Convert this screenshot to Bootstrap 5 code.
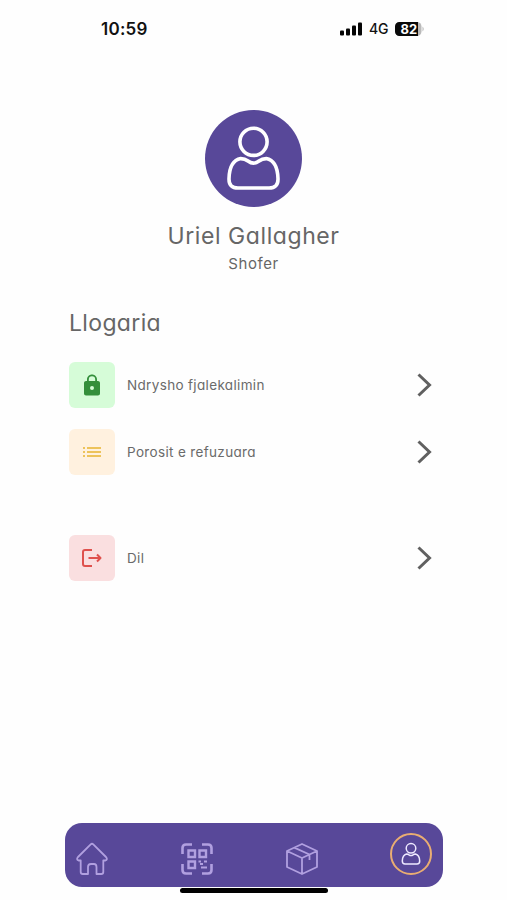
<!DOCTYPE html>
<html lang="sq">
<head>
<meta charset="utf-8">
<meta name="viewport" content="width=device-width, initial-scale=1">
<title>Llogaria</title>
<link href="https://cdn.jsdelivr.net/npm/bootstrap@5.3.0/dist/css/bootstrap.min.css" rel="stylesheet">
<style>
body{background:#fefefe;color:#666;font-family:Inter,"Open Sans",sans-serif;font-feature-settings:"cv11";overflow:hidden}
svg{display:block;flex:none}
.screen{height:900px;width:507px}
.status{height:58px;padding:0 82px 0 101px;color:#111}
.clock{font-size:17px;font-weight:600;line-height:20px;letter-spacing:.25px;width:60px}
.network{font-size:14px;font-weight:500;line-height:20px;letter-spacing:-.2px;margin-left:7px;width:26px}
.profile{padding-top:52px;width:507px}
.avatar{width:97px;height:97px;background:#584899}
.person-name{font-size:23px;line-height:30px;font-weight:400;letter-spacing:.58px;margin-top:14px}
.role{font-size:15px;line-height:20px;letter-spacing:.6px;margin-top:3px}
.account{padding:0 75px 0 69px;margin-top:34px}
.account h2{font-size:23px;line-height:30px;font-weight:400;margin:0 0 24px;letter-spacing:.35px}
.entry{height:46px;font-size:13.5px;color:#6a6a6a;text-decoration:none;margin-bottom:21px}
.entry-label{letter-spacing:.34px;padding-top:1px}
.entry-last{margin-top:60px}
.tile{width:46px;height:46px;border-radius:6px;margin-right:12px}
.tile-green{background:#d6fcd8}.tile-orange{background:#fff1df}.tile-red{background:#fadfe0}
.tabs{height:64px;width:378px;margin:auto 0 13px 65px;background:#584899;border-radius:17px;padding:0 11px 0 10px}
.tab-off{color:#b1a0e0;padding-top:7px}
.active-ring{width:42px;height:42px;border:2px solid #e9ad72;color:#eee9ff;margin-bottom:2px}
.home-line{left:180px;top:888px;width:148px;height:5px;background:#000}
</style>
<script src="https://cdn.jsdelivr.net/npm/bootstrap@5.3.0/dist/js/bootstrap.bundle.min.js"></script>
</head>
<body>
<div class="screen position-relative d-flex flex-column">
  <header class="status d-flex align-items-center">
    <div class="clock text-nowrap">10:59</div>
    <div class="ms-auto d-flex align-items-center">
      <svg width="22" height="14" fill="#050505"><rect x="0" y="8.5" width="4" height="5" rx="1"/><rect x="6" y="6.5" width="4" height="7" rx="1"/><rect x="12" y="3.5" width="4" height="10" rx="1"/><rect x="18" y="0.5" width="4" height="13" rx="1"/></svg>
      <span class="network">4G</span>
      <svg width="30" height="16" viewBox="0 0 30 16"><rect x="0" y="1" width="26.5" height="14" rx="4.5" fill="#b9b9b9"/><path d="M4.5 1H23V15H4.5A4.5 4.5 0 0 1 0 10.5V5.5A4.5 4.5 0 0 1 4.5 1Z" fill="#090909"/><path d="M27.5 5.5q2.5 2.5 0 5Z" fill="#b9b9b9"/><text x="13.8" y="12.7" text-anchor="middle" font-family="Inter" font-weight="700" font-size="13" fill="#fff">82</text></svg>
    </div>
  </header>

  <section class="profile d-flex flex-column align-items-center text-center">
    <div class="avatar rounded-circle d-flex align-items-center justify-content-center">
      <svg width="97" height="97" fill="none" stroke="#fff" stroke-width="3.6" stroke-linejoin="round"><circle cx="48.5" cy="31.8" r="13.6"/><path d="M35.8 48.6Q39.8 48.6 43 51Q48.5 55.2 54 51Q57.2 48.6 61.2 48.6C69 50 72.7 57.8 73 68.8Q73.2 78 64 78H33Q23.8 78 24 68.8C24.3 57.8 28 50 35.8 48.6Z"/></svg>
    </div>
    <h1 class="person-name mb-0">Uriel Gallagher</h1>
    <div class="role">Shofer</div>
  </section>

  <main class="account">
    <h2>Llogaria</h2>
    <a href="#" class="entry d-flex align-items-center">
      <span class="tile tile-green d-flex align-items-center justify-content-center"><svg width="24" height="24" viewBox="0 0 24 24" fill="#348f3b"><path fill-rule="evenodd" d="M18 8h-1V6.5C17 3.7 14.8 1.5 12 1.5S7 3.7 7 6.5V8H6c-1.1 0-2 .9-2 2v10.5c0 1.1.9 2 2 2h12c1.1 0 2-.9 2-2V10c0-1.1-.9-2-2-2ZM12 17a2 2 0 1 1 0-4 2 2 0 0 1 0 4ZM15.2 8H8.8V6.5a3.2 3.2 0 0 1 6.4 0Z"/></svg></span>
      <span class="entry-label">Ndrysho fjalekalimin</span>
      <svg class="ms-auto" width="15" height="26" fill="none" stroke="#606060" stroke-width="3"><path d="m1.5 2.5 11 10.500-11 10.500"/></svg>
    </a>
    <a href="#" class="entry d-flex align-items-center">
      <span class="tile tile-orange d-flex align-items-center justify-content-center"><svg width="20" height="14" fill="#edc35b"><path d="M1 2h2v2H1zm0 4h2v2H1zm0 4h2v2H1zM5 2h14v2H5zm0 4h14v2H5zm0 4h14v2H5z"/></svg></span>
      <span class="entry-label">Porosit e refuzuara</span>
      <svg class="ms-auto" width="15" height="26" fill="none" stroke="#606060" stroke-width="3"><path d="m1.5 2.5 11 10.500-11 10.500"/></svg>
    </a>
    <a href="#" class="entry entry-last d-flex align-items-center">
      <span class="tile tile-red d-flex align-items-center justify-content-center"><svg width="22" height="20" fill="none" stroke="#df514d" stroke-width="2" stroke-linejoin="round"><path d="M11 2H4Q2 2 2 4V16Q2 18 4 18H11M7.5 10H19.5M16 6.5l3.500 3.500-3.500 3.500"/></svg></span>
      <span class="entry-label">Dil</span>
      <svg class="ms-auto" width="15" height="26" fill="none" stroke="#606060" stroke-width="3"><path d="m1.5 2.5 11 10.500-11 10.500"/></svg>
    </a>
  </main>

  <nav class="tabs d-flex align-items-center justify-content-between">
    <a href="#" class="tab-off" aria-label="Home"><svg width="34" height="34" fill="none" stroke="currentColor" stroke-width="1.8" stroke-linejoin="round"><path d="M15.7 2.4Q17 1.2 18.3 2.4L31 15Q33 17.500 30.5 18.500H28.300V30Q28.300 32 26.300 32H21.500V25Q21.500 22 19 22H16Q13 22 13 25V32H7.700Q5.700 32 5.700 30V18.500H3.500Q1 17.500 3 15Z"/></svg></a>
    <a href="#" class="tab-off" aria-label="QR"><svg width="34" height="34" fill="none" stroke="currentColor" stroke-width="2"><path stroke-width="2.6" d="M12 2.500H6Q2.500 2.500 2.500 6V12M22 2.500H28Q31.500 2.500 31.500 6V12M2.500 22V28Q2.500 31.500 6 31.500H12M22 31.500H28Q31.500 31.500 31.500 28V22"/><path stroke-width="2.4" d="M8.500 8.500h6.500v6.500h-6.500zM19.500 8.500h6.500v6.500h-6.500zM8.500 19.500h6.500v6.500h-6.500z"/><path d="M18.500 19.500H21M24 19.500H27M20 22H23M21 25.500H27"/></svg></a>
    <a href="#" class="tab-off" aria-label="Package"><svg width="34" height="34" fill="none" stroke="currentColor" stroke-width="1.8" stroke-linejoin="round"><path d="M17 2 32 9V25L17 32 2 25V9ZM2 9l15 7 15-7M17 16V32M9.300 5.600 24.500 12.500V18"/></svg></a>
    <a href="#" class="active-ring rounded-circle d-flex align-items-center justify-content-center" aria-label="Profile"><svg width="22" height="26" fill="none" stroke="currentColor" stroke-width="1.5"><circle cx="11" cy="7.300" r="4.800"/><path d="M6.500 13Q8 13 9 13.800Q11 15.200 13 13.800Q14 13 15.500 13Q19.500 14 19.700 20Q19.700 23 17 23H5Q2.300 23 2.300 20Q2.500 14 6.500 13Z"/></svg></a>
  </nav>
  <div class="home-line position-absolute rounded-pill"></div>
</div>
</body>
</html>
